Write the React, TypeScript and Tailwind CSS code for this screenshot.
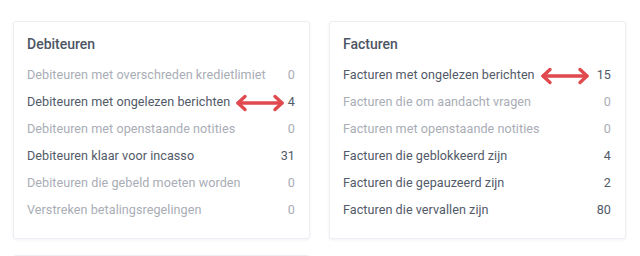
import React from "react";

type Row = { label: string; value: string; active: boolean; arrow?: boolean };

const debiteuren: Row[] = [
  { label: "Debiteuren met overschreden kredietlimiet", value: "0", active: false },
  { label: "Debiteuren met ongelezen berichten", value: "4", active: true, arrow: true },
  { label: "Debiteuren met openstaande notities", value: "0", active: false },
  { label: "Debiteuren klaar voor incasso", value: "31", active: true },
  { label: "Debiteuren die gebeld moeten worden", value: "0", active: false },
  { label: "Verstreken betalingsregelingen", value: "0", active: false },
];

const facturen: Row[] = [
  { label: "Facturen met ongelezen berichten", value: "15", active: true, arrow: true },
  { label: "Facturen die om aandacht vragen", value: "0", active: false },
  { label: "Facturen met openstaande notities", value: "0", active: false },
  { label: "Facturen die geblokkeerd zijn", value: "4", active: true },
  { label: "Facturen die gepauzeerd zijn", value: "2", active: true },
  { label: "Facturen die vervallen zijn", value: "80", active: true },
];

function Arrow() {
  return (
    <svg width="50" height="18" viewBox="0 0 50 18" className="ml-[5px] shrink-0">
      <g fill="none" stroke="#e04a4f" strokeWidth="3.4" strokeLinecap="round" strokeLinejoin="round">
        <line x1="3" y1="9" x2="47" y2="9" />
        <polyline points="10,2.5 3,9 10,15.5" />
        <polyline points="40,2.5 47,9 40,15.5" />
      </g>
    </svg>
  );
}

function Card({ title, rows }: { title: string; rows: Row[] }) {
  return (
    <div className="bg-white border border-[#eceef4] rounded-[3px] shadow-[0_1px_3px_rgba(30,40,90,0.06)] pl-[13px] pr-[14px] pt-[12px] pb-[14px]">
      <div className="text-[14px] leading-[20px] font-medium text-[#4d5565]">{title}</div>
      <div className="mt-[8px] flex flex-col">
        {rows.map((r) => (
          <div
            key={r.label}
            className={`flex items-center h-[27px] text-[12.6px] tracking-[0.05px] ${r.active ? "text-[#525a68]" : "text-[#a9adb6]"}`}
          >
            <span className="whitespace-nowrap">{r.label}</span>
            {r.arrow ? <Arrow /> : null}
            <span className="ml-auto">{r.value}</span>
          </div>
        ))}
      </div>
    </div>
  );
}

export default function App() {
  return (
    <div
      className="w-[640px] h-[256px] overflow-hidden bg-white pt-[21px] pl-[13px] pr-[14px]"
      style={{ fontFamily: "Roboto, 'Liberation Sans', sans-serif" }}
    >
      <div className="grid grid-cols-2 gap-x-[19px] gap-y-[16px]">
        <Card title="Debiteuren" rows={debiteuren} />
        <Card title="Facturen" rows={facturen} />
        <div className="bg-white border border-[#eceef4] rounded-[3px] h-[60px]" />
      </div>
    </div>
  );
}
